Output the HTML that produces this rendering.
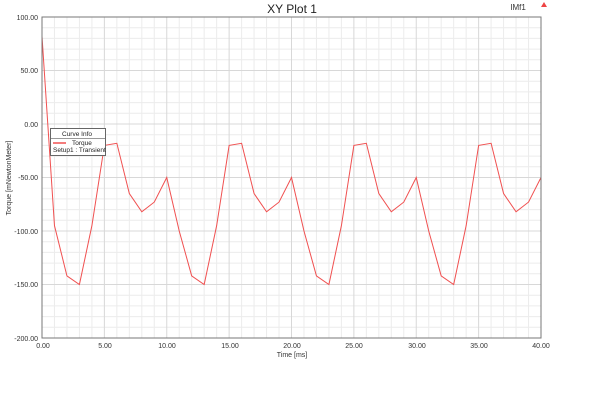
<!DOCTYPE html>
<html><head><meta charset="utf-8"><style>
body{margin:0;background:#fff;width:606px;height:406px;overflow:hidden;font-family:"Liberation Sans",sans-serif}
</style></head><body>
<svg width="606" height="406" xmlns="http://www.w3.org/2000/svg" font-family="Liberation Sans, sans-serif">
<text x="292" y="13" font-size="12" text-anchor="middle" fill="#222">XY Plot 1</text>
<text x="518" y="10" font-size="8" text-anchor="middle" fill="#333">IMf1</text>
<path d="M544 2 L547 7 L541 7 Z" fill="#e44"/>
<g transform="translate(42,17) scale(12.475,-1.07) translate(0,-100)" fill="none">
<g stroke="#ececec" vector-effect="non-scaling-stroke">
<path vector-effect="non-scaling-stroke" d="M1 -200V100M2 -200V100M3 -200V100M4 -200V100M6 -200V100M7 -200V100M8 -200V100M9 -200V100M11 -200V100M12 -200V100M13 -200V100M14 -200V100M16 -200V100M17 -200V100M18 -200V100M19 -200V100M21 -200V100M22 -200V100M23 -200V100M24 -200V100M26 -200V100M27 -200V100M28 -200V100M29 -200V100M31 -200V100M32 -200V100M33 -200V100M34 -200V100M36 -200V100M37 -200V100M38 -200V100M39 -200V100"/>
<path vector-effect="non-scaling-stroke" d="M0 90H40M0 80H40M0 70H40M0 60H40M0 40H40M0 30H40M0 20H40M0 10H40M0 -10H40M0 -20H40M0 -30H40M0 -40H40M0 -60H40M0 -70H40M0 -80H40M0 -90H40M0 -110H40M0 -120H40M0 -130H40M0 -140H40M0 -160H40M0 -170H40M0 -180H40M0 -190H40"/>
</g>
<path stroke="#d8d8d8" vector-effect="non-scaling-stroke" d="M5 -200V100M10 -200V100M15 -200V100M20 -200V100M25 -200V100M30 -200V100M35 -200V100M0 50H40M0 0H40M0 -50H40M0 -100H40M0 -150H40"/>
<path stroke="#f05050" vector-effect="non-scaling-stroke" d="M0 82L1 -95 2 -142 3 -150 4 -95 5 -20 6 -18 7 -65 8 -82 9 -73 10 -50 11 -100 12 -142 13 -150 14 -95 15 -20 16 -18 17 -65 18 -82 19 -73 20 -50 21 -100 22 -142 23 -150 24 -95 25 -20 26 -18 27 -65 28 -82 29 -73 30 -50 31 -100 32 -142 33 -150 34 -95 35 -20 36 -18 37 -65 38 -82 39 -73 40 -50"/>
</g>
<rect x="42" y="17" width="499" height="321" fill="none" stroke="#777" stroke-width="1"/>
<g font-size="7" fill="#333" text-anchor="end">
<text x="38" y="20">100.00</text><text x="38" y="73">50.00</text><text x="38" y="127">0.00</text>
<text x="38" y="180">-50.00</text><text x="38" y="234">-100.00</text><text x="38" y="287">-150.00</text><text x="38" y="341">-200.00</text>
</g>
<g font-size="7" fill="#333" text-anchor="middle">
<text x="43" y="348">0.00</text><text x="105" y="348">5.00</text><text x="167" y="348">10.00</text><text x="230" y="348">15.00</text>
<text x="292" y="348">20.00</text><text x="354" y="348">25.00</text><text x="417" y="348">30.00</text><text x="479" y="348">35.00</text><text x="541" y="348">40.00</text>
<text x="292" y="357">Time [ms]</text>
</g>
<text transform="translate(11,178) rotate(-90)" font-size="7" fill="#333" text-anchor="middle">Torque [mNewtonMeter]</text>
<rect x="50.5" y="128.5" width="55" height="27" fill="#fff" stroke="#666"/>
<line x1="51" y1="138.5" x2="105" y2="138.5" stroke="#999"/>
<text x="77" y="136" font-size="6.5" text-anchor="middle" fill="#222">Curve Info</text>
<line x1="53" y1="143" x2="66" y2="143" stroke="#f05050" stroke-width="1.5"/>
<text x="72" y="145" font-size="6.5" fill="#222">Torque</text>
<text x="53" y="152" font-size="6.5" fill="#222">Setup1 : Transient</text>
</svg>
</body></html>
